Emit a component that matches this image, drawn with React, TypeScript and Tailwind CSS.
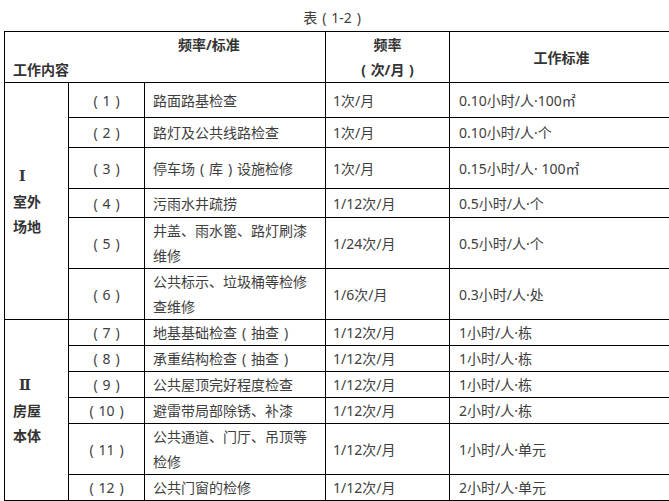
const font = { fontFamily: '"Noto Sans", "Noto Sans CJK SC", sans-serif' };

interface Row {
  no: string;
  item: string[];
  freq: string;
  std: string;
  h: string;
}

const outdoor: Row[] = [
  { no: '（1）', item: ['路面路基检查'], freq: '1次/月', std: '0.10小时/人·100㎡', h: 'h-[35px]' },
  { no: '（2）', item: ['路灯及公共线路检查'], freq: '1次/月', std: '0.10小时/人·个', h: 'h-[30px]' },
  { no: '（3）', item: ['停车场（库）设施检修'], freq: '1次/月', std: '0.15小时/人· 100㎡', h: 'h-[41px]' },
  { no: '（4）', item: ['污雨水井疏捞'], freq: '1/12次/月', std: '0.5小时/人·个', h: 'h-[29px]' },
  { no: '（5）', item: ['井盖、雨水篦、路灯刷漆', '维修'], freq: '1/24次/月', std: '0.5小时/人·个', h: 'h-[51px]' },
  { no: '（6）', item: ['公共标示、垃圾桶等检修', '查维修'], freq: '1/6次/月', std: '0.3小时/人·处', h: 'h-[51px]' },
];

const building: Row[] = [
  { no: '（7）', item: ['地基基础检查（抽查）'], freq: '1/12次/月', std: '1小时/人·栋', h: 'h-[26px]' },
  { no: '（8）', item: ['承重结构检查（抽查）'], freq: '1/12次/月', std: '1小时/人·栋', h: 'h-[26px]' },
  { no: '（9）', item: ['公共屋顶完好程度检查'], freq: '1/12次/月', std: '1小时/人·栋', h: 'h-[26px]' },
  { no: '（10）', item: ['避雷带局部除锈、补漆'], freq: '1/12次/月', std: '2小时/人·栋', h: 'h-[26px]' },
  { no: '（11）', item: ['公共通道、门厅、吊顶等', '检修'], freq: '1/12次/月', std: '1小时/人·单元', h: 'h-[51px]' },
  { no: '（12）', item: ['公共门窗的检修'], freq: '1/12次/月', std: '2小时/人·单元', h: 'h-[26px]' },
];

// full-width brackets drawn with the glyph centred in a 1em box
function Fw({ text }: { text: string }) {
  const parts = text.split(/([（）])/);
  return (
    <>
      {parts.map((p, i) =>
        p === '（' || p === '）' ? (
          <span key={i} className="inline-block w-[14px] text-center">
            {p === '（' ? '(' : ')'}
          </span>
        ) : (
          <span key={i}>{p}</span>
        ),
      )}
    </>
  );
}

const td = 'border border-black align-middle p-0';

function Group({ rows, numeral, title }: { rows: Row[]; numeral: string; title: string[] }) {
  return (
    <>
      {rows.map((r, i) => (
        <tr key={r.no} className={r.h}>
          {i === 0 && (
            <td rowSpan={rows.length} className={`${td} pl-[8px] font-bold leading-[25px] text-[#333]`}>
              <div className="pl-[6px]" style={{ fontFamily: '"DejaVu Serif", serif' }}>{numeral}</div>
              {title.map((t) => (
                <div key={t}>{t}</div>
              ))}
            </td>
          )}
          <td className={`${td} text-center`}>
            <Fw text={r.no} />
          </td>
          <td className={`${td} pl-[8px] leading-[25px]`}>
            {r.item.map((t) => (
              <div key={t}>
                <Fw text={t} />
              </div>
            ))}
          </td>
          <td className={`${td} pl-[7px]`}>{r.freq}</td>
          <td className={`${td} pl-[9px]`}>{r.std}</td>
        </tr>
      ))}
    </>
  );
}

export default function App() {
  return (
    <div className="w-[669px] h-[501px] overflow-hidden bg-white text-[14px] text-[#3e3e3e]" style={font}>
      <div className="pt-[6px] h-[31px] text-center leading-[24px]">
        <Fw text="表（1-2）" />
      </div>
      <table className="ml-[4px] w-[669px] table-fixed border-collapse">
        <colgroup>
          <col className="w-[64px]" />
          <col className="w-[76px]" />
          <col className="w-[181px]" />
          <col className="w-[124px]" />
          <col className="w-[224px]" />
        </colgroup>
        <tbody>
          <tr className="h-[51px]">
            <td colSpan={3} className={`${td} font-bold leading-[25px] text-[#333]`}>
              <div className="pl-[173px]">频率/标准</div>
              <div className="pl-[8px]">工作内容</div>
            </td>
            <td className={`${td} text-center font-bold leading-[25px] text-[#333]`}>
              <div>频率</div>
              <div>
                <Fw text="（次/月）" />
              </div>
            </td>
            <td className={`${td} text-center font-bold text-[#333]`}>工作标准</td>
          </tr>
          <Group rows={outdoor} numeral="Ⅰ" title={['室外', '场地']} />
          <Group rows={building} numeral="Ⅱ" title={['房屋', '本体']} />
        </tbody>
      </table>
    </div>
  );
}
